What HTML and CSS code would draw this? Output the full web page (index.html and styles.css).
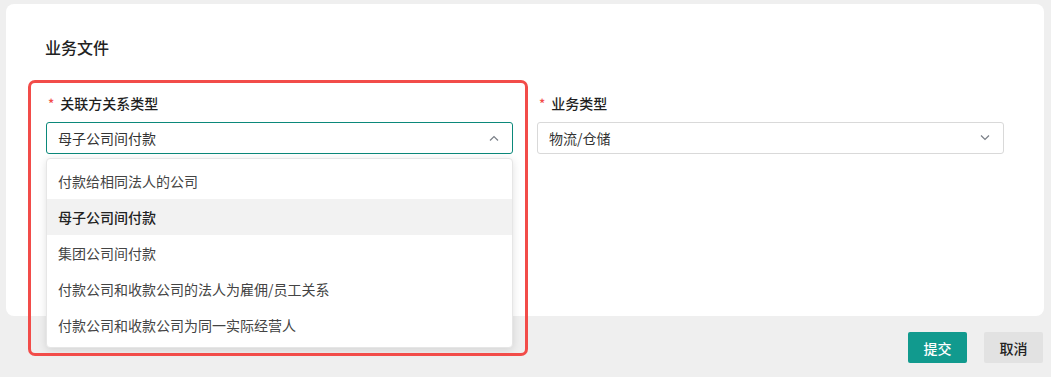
FILE: index.html
```html
<!DOCTYPE html>
<html lang="zh-CN">
<head>
    <meta charset="UTF-8">
    <title>业务文件</title>
    <link rel="stylesheet" href="styles.css">
</head>
<body>

    <!-- 表单卡片 -->
    <div class="card">
        <h2 class="card-title">业务文件</h2>

        <div class="form-row">
            <div class="field field-focus">
                <div class="highlight-box"></div>
                <label class="field-label"><span class="required">*</span>关联方关系类型</label>
                <div class="select select-open">
                    <span class="select-value">母子公司间付款</span>
                    <svg class="select-arrow" width="10" height="6" viewBox="0 0 10 6"><path d="M1 5.5 L5 1.5 L9 5.5" fill="none" stroke="#7a7f87" stroke-width="1.2"/></svg>
                </div>
                <ul class="dropdown">
                    <li>付款给相同法人的公司</li>
                    <li class="active">母子公司间付款</li>
                    <li>集团公司间付款</li>
                    <li>付款公司和收款公司的法人为雇佣/员工关系</li>
                    <li>付款公司和收款公司为同一实际经营人</li>
                </ul>
            </div>

            <div class="field">
                <label class="field-label"><span class="required">*</span>业务类型</label>
                <div class="select">
                    <span class="select-value">物流/仓储</span>
                    <svg class="select-arrow" width="10" height="6" viewBox="0 0 10 6"><path d="M1 0.5 L5 4.5 L9 0.5" fill="none" stroke="#7a7f87" stroke-width="1.2"/></svg>
                </div>
            </div>
        </div>
    </div>

    <div class="actions">
        <button class="btn btn-primary">提交</button>
        <button class="btn btn-default">取消</button>
    </div>

</body>
</html>
```

FILE: styles.css
```css
body {
    margin: 0;
    background-color: #efefef;
    font-family: "Noto Sans CJK SC", "Noto Sans", sans-serif;
    font-size: 14px;
    color: #333;
}
.card {
    margin: 4px 7px 0 6px;
    height: 312px;
    box-sizing: border-box;
    padding: 32px 40px 0 40px;
    background-color: #fff;
    border-radius: 8px;
}
.card-title {
    margin: 0 0 0 -1px;
    font-size: 16px;
    font-weight: 500;
    line-height: 22px;
    color: #222;
}
.form-row {
    display: grid;
    grid-template-columns: 467px 467px;
    column-gap: 24px;
    margin-top: 35px;
}
.field {
    position: relative;
}
.highlight-box {
    position: absolute;
    left: -18px;
    top: -13px;
    width: 500px;
    height: 276px;
    box-sizing: border-box;
    border: 3px solid #f24c49;
    border-radius: 7px;
    z-index: 2;
    pointer-events: none;
}
.field-label {
    display: block;
    line-height: 20px;
    font-weight: 500;
    color: #1f1f1f;
    margin-bottom: 8px;
}
.required {
    color: #f24c49;
    margin: 0 6px 0 2px;
    font-size: 13px;
}
.select {
    height: 32px;
    box-sizing: border-box;
    border: 1px solid #d9d9d9;
    border-radius: 3px;
    padding: 0 13px 0 11px;
    display: flex;
    align-items: center;
    justify-content: space-between;
    color: #333;
}
.select-open {
    border-color: #0b887a;
}
.dropdown {
    position: absolute;
    left: 0;
    right: 0;
    top: 65px;
    margin: 0;
    padding: 4px 0;
    list-style: none;
    background-color: #fff;
    border: 1px solid #e6e6e6;
    border-radius: 4px;
    box-shadow: 0 2px 8px rgba(0, 0, 0, 0.12);
    z-index: 1;
}
.dropdown li {
    height: 36px;
    line-height: 36px;
    padding: 0 11px;
    color: #444;
}
.dropdown li.active {
    background-color: #f2f2f2;
    font-weight: 500;
    color: #222;
}
.actions {
    display: flex;
    justify-content: flex-end;
    gap: 17px;
    margin: 16px 8px 0 0;
}
.btn {
    width: 59px;
    height: 31px;
    border: none;
    border-radius: 2px;
    font-family: inherit;
    font-size: 14px;
    font-weight: 500;
    cursor: pointer;
}
.btn-primary {
    background-color: #119a8e;
    color: #fff;
}
.btn-default {
    background-color: #e2e2e2;
    color: #222;
}
```
